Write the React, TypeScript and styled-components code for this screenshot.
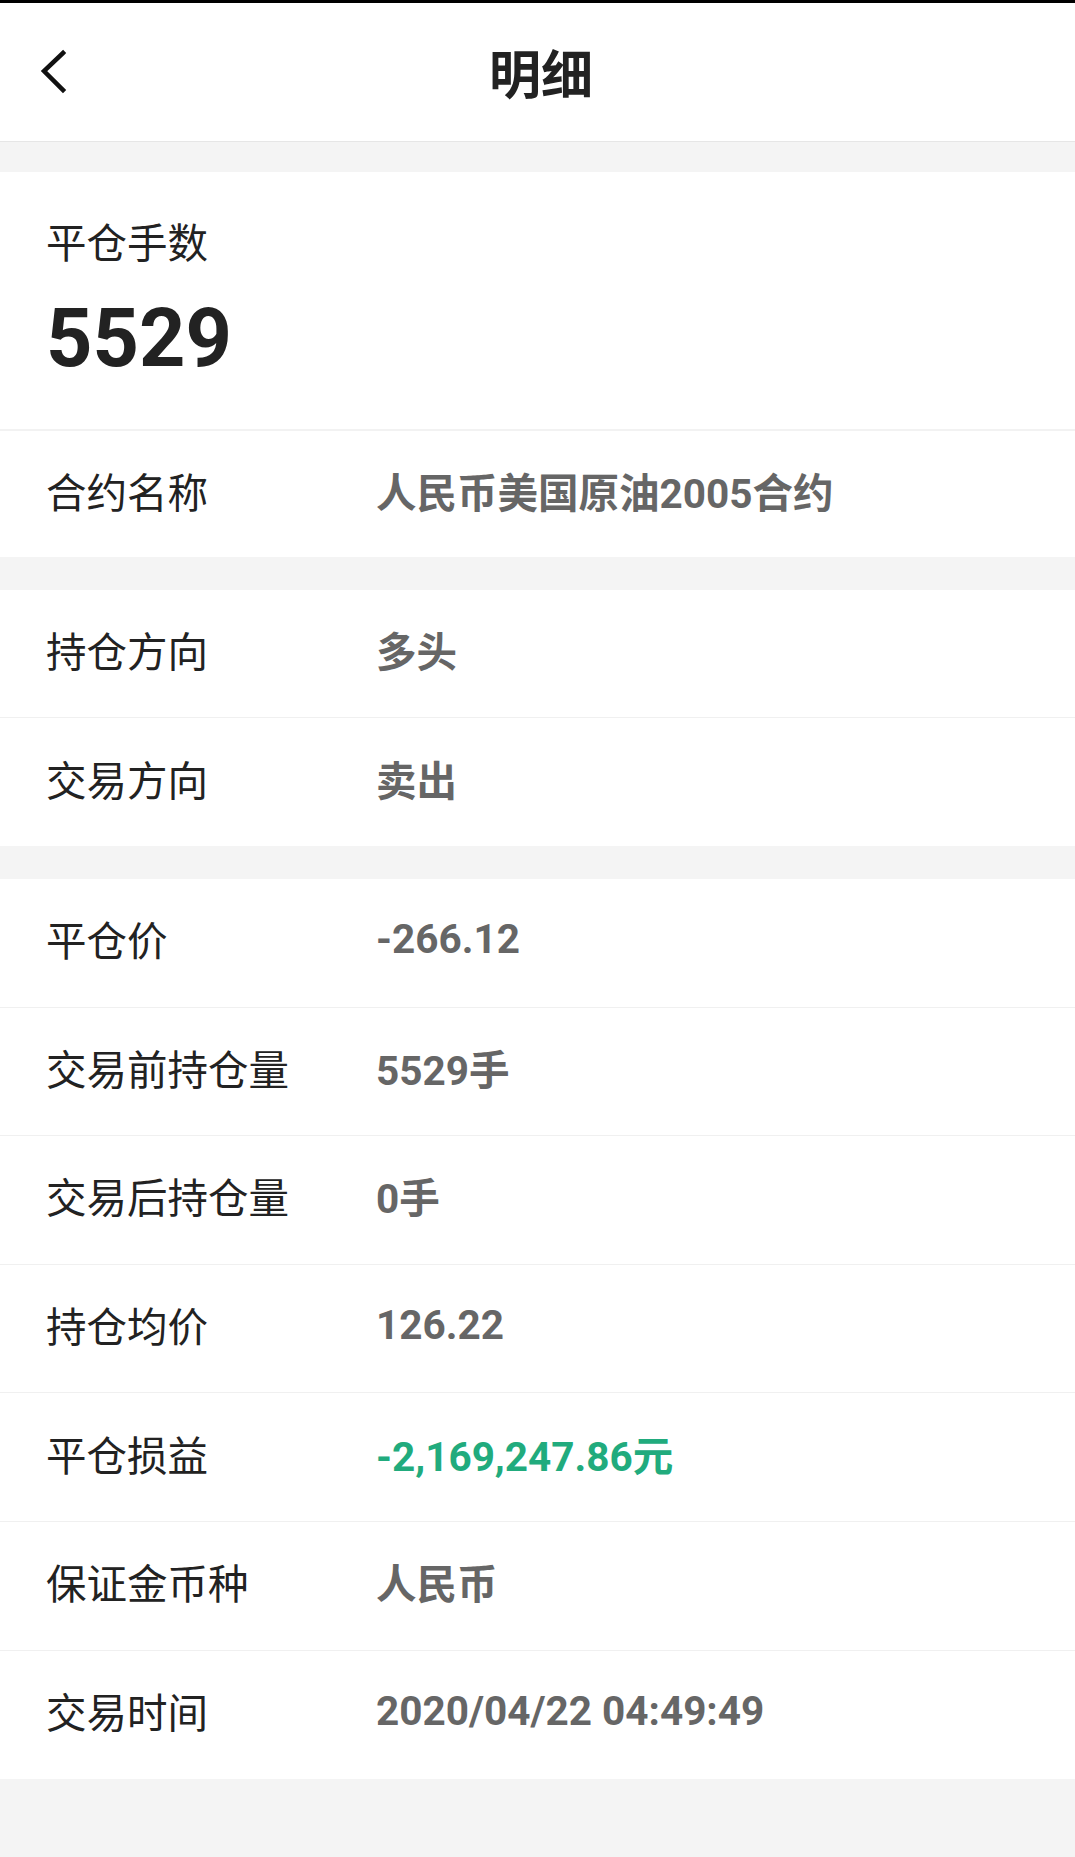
import * as React from 'react'
import styled, { createGlobalStyle } from 'styled-components'

const GlobalStyle = createGlobalStyle`
  html, body {
    margin: 0;
    padding: 0;
    background: #f4f4f4;
  }
  body {
    font-family: Roboto, "Noto Sans CJK SC", sans-serif;
    -webkit-font-smoothing: antialiased;
  }
  * {
    box-sizing: border-box;
  }
`

const Page = styled.div`
  width: 1075px;
  min-height: 1857px;
  background: #f4f4f4;
  border-top: 3px solid #000;
`

const Header = styled.header`
  position: relative;
  height: 139px;
  background: #fff;
  border-bottom: 1px solid #e6e6e6;
  display: flex;
  align-items: center;
  justify-content: center;
`

const BackButton = styled.button`
  position: absolute;
  left: 30px;
  top: 50%;
  transform: translateY(-50%);
  width: 48px;
  height: 60px;
  padding: 0;
  border: none;
  background: none;
  display: flex;
  align-items: center;
  justify-content: center;
`

const Title = styled.h1`
  margin: 0 0 2px 7px;
  font-size: 52px;
  font-weight: 700;
  color: #222;
`

const Section = styled.section<{ $gap: number }>`
  margin-top: ${props => props.$gap}px;
  background: #fff;
`

const Summary = styled.div`
  height: 259px;
  padding: 44px 46px 0;
  border-bottom: 2px solid #f2f2f2;
`

const SummaryLabel = styled.div`
  font-size: 40.5px;
  line-height: 56px;
  color: #222;
`

const SummaryValue = styled.div`
  margin-top: 19px;
  font-size: 81px;
  line-height: 96px;
  font-weight: 700;
  color: #222;
`

const Row = styled.div<{ $height: number }>`
  display: flex;
  align-items: center;
  height: ${props => props.$height}px;
  padding: 0 46px 8px;
  border-bottom: 1px solid #f0f0f0;
  &:last-child {
    border-bottom: none;
  }
`

const Label = styled.div`
  width: 330px;
  flex-shrink: 0;
  font-size: 40.5px;
  color: #222;
`

const Value = styled.div<{ $tone?: 'green' }>`
  font-size: 40.5px;
  font-weight: 700;
  color: ${props => (props.$tone === 'green' ? '#21ab7d' : '#666')};
`

const ChevronLeft = () => (
  <svg width="30" height="46" viewBox="0 0 30 46" fill="none">
    <path d="M24 4 L5 22 L24 41" stroke="#111" strokeWidth="4.5" strokeLinecap="square" strokeLinejoin="miter" />
  </svg>
)

interface Item {
  label: string
  value: string
  tone?: 'green'
}

const positionRows: Item[] = [
  { label: '持仓方向', value: '多头' },
  { label: '交易方向', value: '卖出' },
]

const tradeRows: Item[] = [
  { label: '平仓价', value: '-266.12' },
  { label: '交易前持仓量', value: '5529手' },
  { label: '交易后持仓量', value: '0手' },
  { label: '持仓均价', value: '126.22' },
  { label: '平仓损益', value: '-2,169,247.86元', tone: 'green' },
  { label: '保证金币种', value: '人民币' },
  { label: '交易时间', value: '2020/04/22 04:49:49' },
]

const DetailRow: React.FC<Item & { height: number }> = ({ label, value, tone, height }) => (
  <Row $height={height}>
    <Label>{label}</Label>
    <Value $tone={tone}>{value}</Value>
  </Row>
)

const App: React.FC = () => (
  <>
    <GlobalStyle />
    <Page>
      <Header>
        <BackButton aria-label="返回">
          <ChevronLeft />
        </BackButton>
        <Title>明细</Title>
      </Header>

      <Section $gap={30}>
        <Summary>
          <SummaryLabel>平仓手数</SummaryLabel>
          <SummaryValue>5529</SummaryValue>
        </Summary>
        <DetailRow label="合约名称" value="人民币美国原油2005合约" height={126} />
      </Section>

      <Section $gap={33}>
        {positionRows.map(row => (
          <DetailRow key={row.label} {...row} height={128} />
        ))}
      </Section>

      <Section $gap={33}>
        {tradeRows.map(row => (
          <DetailRow key={row.label} {...row} height={128.6} />
        ))}
      </Section>
    </Page>
  </>
)

export default App
